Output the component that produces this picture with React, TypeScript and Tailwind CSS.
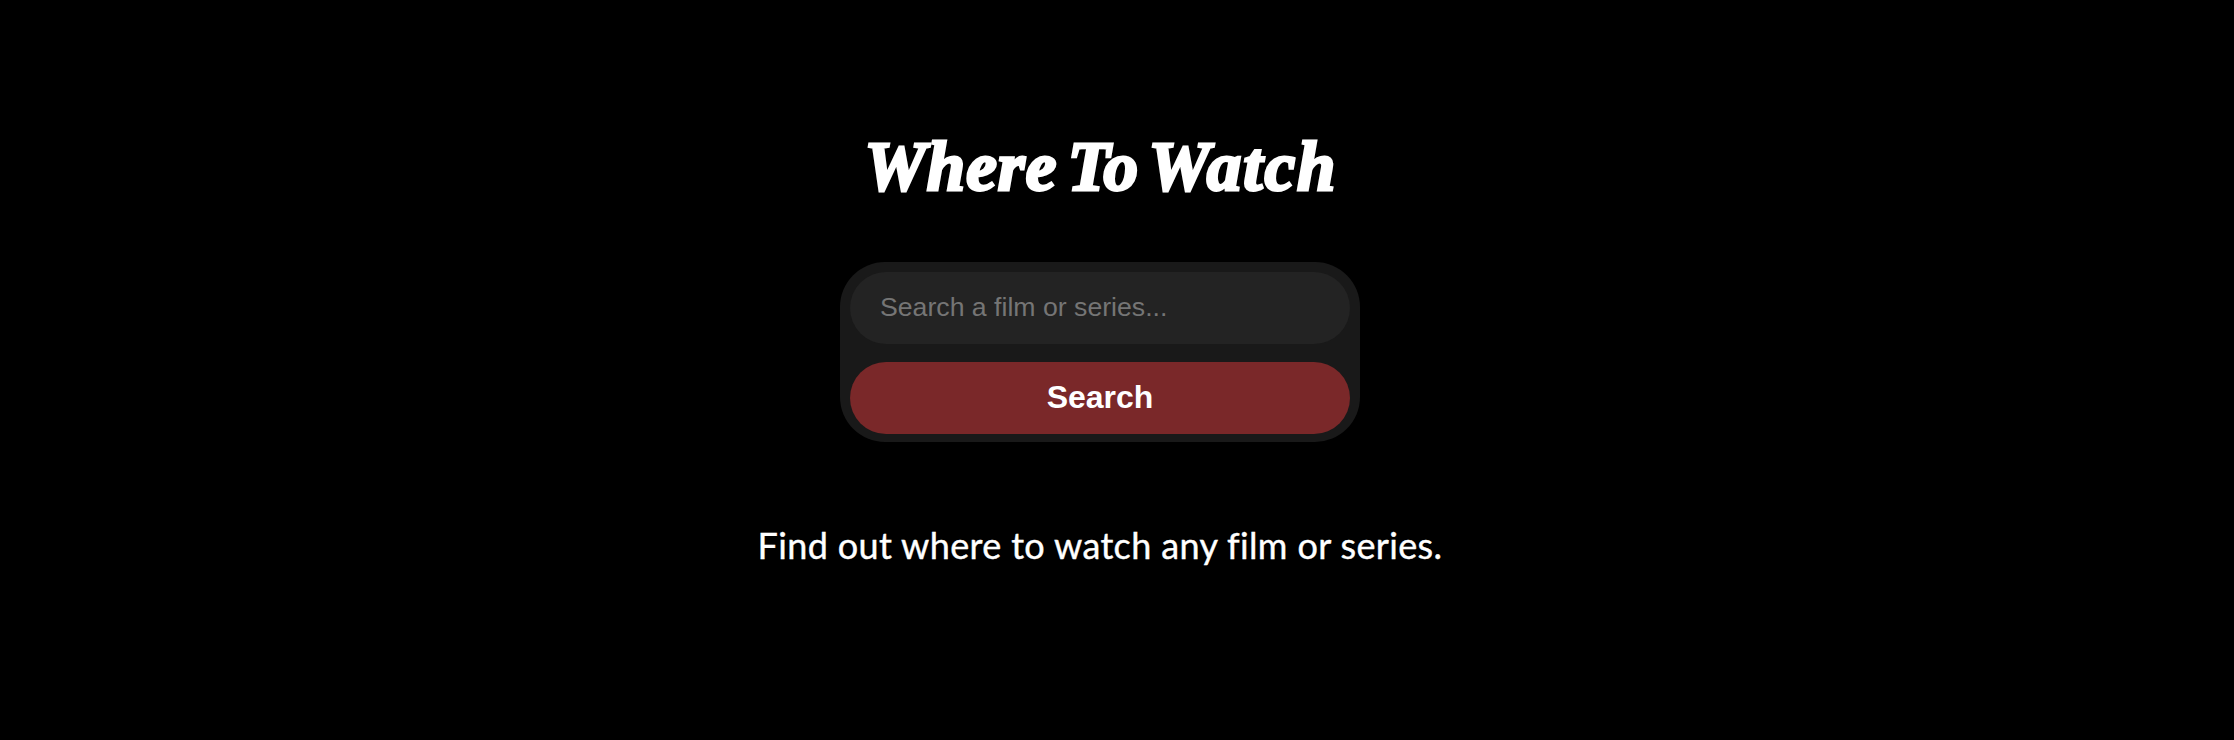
export default function App() {
  return (
    <main className="h-[740px] w-full overflow-hidden bg-black pr-[34px] text-white">
      <div className="flex flex-col items-center pt-[122px]">
        <h1 className="flex h-[90px] w-[471px] items-center justify-between whitespace-nowrap font-['Liberation_Serif',serif] text-[69px] leading-[90px] font-bold italic [-webkit-text-stroke:3px_white]">
          <span className="tracking-[1px]">Where</span>
          <span>To</span>
          <span className="-mr-[2px] tracking-[2px]">Watch</span>
        </h1>
        <form className="mt-[50px] flex h-[180px] w-[520px] flex-col gap-[18px] rounded-[45px] bg-[#191919] px-[10px] pt-[10px] font-['Liberation_Sans',sans-serif]">
          <input
            type="text"
            placeholder="Search a film or series..."
            className="h-[72px] w-full rounded-full bg-[#232323] px-[30px] pb-[2px] text-[26.667px] text-white outline-none placeholder:text-[#757575]"
          />
          <button type="button" className="h-[72px] w-full rounded-full bg-[#7a2829] pb-[3px] text-[32px] font-bold">
            Search
          </button>
        </form>
        <p className="mt-[78px] whitespace-nowrap font-[Lato,sans-serif] text-[36px] leading-[50px] tracking-[0.36px] [-webkit-text-stroke:0.4px_white]">
          Find out where to watch any film or series.
        </p>
      </div>
    </main>
  );
}
